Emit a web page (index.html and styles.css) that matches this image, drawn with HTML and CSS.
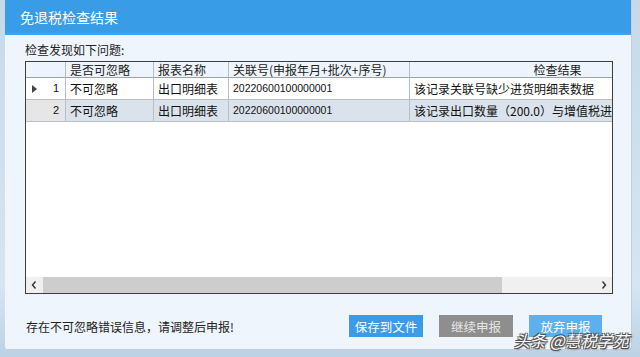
FILE: index.html
```html
<!DOCTYPE html>
<html lang="zh-CN">
<head>
    <meta charset="UTF-8">
    <title>免退税检查结果</title>
    <link rel="stylesheet" href="styles.css">
</head>
<body>
    <div class="dialog">
        <div class="dialog-title">免退税检查结果</div>
        <div class="dialog-body">
            <div class="intro">检查发现如下问题:</div>
            <div class="grid-box">
                <div class="grid-view">
                    <div class="grid">
                        <div class="cell head rowhead"></div>
                        <div class="cell head">是否可忽略</div>
                        <div class="cell head">报表名称</div>
                        <div class="cell head">关联号(申报年月+批次+序号)</div>
                        <div class="cell head center">检查结果</div>

                        <div class="cell rowhead current">
                            <svg class="marker" viewBox="0 0 5 8" width="5" height="8"><polygon points="0,0 5,4 0,8" fill="#444"/></svg>
                            <span>1</span>
                        </div>
                        <div class="cell">不可忽略</div>
                        <div class="cell">出口明细表</div>
                        <div class="cell num">20220600100000001</div>
                        <div class="cell">该记录关联号缺少进货明细表数据</div>

                        <div class="cell rowhead alt"><span>2</span></div>
                        <div class="cell alt">不可忽略</div>
                        <div class="cell alt">出口明细表</div>
                        <div class="cell alt num">20220600100000001</div>
                        <div class="cell alt">该记录出口数量（200.0）与增值税进货明细表数据不符</div>
                    </div>
                </div>
                <div class="hscroll">
                    <div class="scroll-btn">
                        <svg viewBox="0 0 6 8" width="6" height="8"><polyline points="4.5,0.5 1.5,4 4.5,7.5" fill="none" stroke="#333" stroke-width="1.4"/></svg>
                    </div>
                    <div class="scroll-thumb"></div>
                    <div class="scroll-track"></div>
                    <div class="scroll-btn">
                        <svg viewBox="0 0 6 8" width="6" height="8"><polyline points="1.5,0.5 4.5,4 1.5,7.5" fill="none" stroke="#333" stroke-width="1.4"/></svg>
                    </div>
                </div>
            </div>
            <div class="footer">
                <div class="message">存在不可忽略错误信息，请调整后申报!</div>
                <div class="actions">
                    <button class="btn btn-save">保存到文件</button>
                    <button class="btn btn-continue">继续申报</button>
                    <button class="btn btn-abandon">放弃申报</button>
                </div>
            </div>
        </div>
        <div class="watermark">头条 @慧税学苑</div>
    </div>
</body>
</html>
```

FILE: styles.css
```css
body {
    margin: 0;
    padding: 0;
    width: 640px;
    height: 357px;
    overflow: hidden;
    font-family: "Noto Sans CJK SC", "Liberation Sans", sans-serif;
    background: linear-gradient(180deg, #c7d9e8 0%, #d6e5f1 80%, #bcd2e5 100%);
}

.dialog {
    position: relative;
    margin-left: 5px;
    width: 627px;
    height: 350px;
    display: flex;
    flex-direction: column;
    background: #eef5fc;
    border-right: 1px solid #c3ced8;
    border-bottom: 1px solid #c3ced8;
    border-radius: 0 0 3px 3px;
    box-sizing: border-box;
}

.dialog-title {
    height: 35px;
    box-sizing: border-box;
    padding-left: 15px;
    background: #389ce6;
    border-bottom: 2px solid #3fa3ee;
    color: #fff;
    font-size: 14px;
    line-height: 34px;
}

.dialog-body {
    flex: 1;
    display: flex;
    flex-direction: column;
    padding: 7px 18px 0 20px;
}

.intro {
    height: 19px;
    font-size: 12px;
    line-height: 16px;
    color: #222;
}

.grid-box {
    width: 588px;
    height: 233px;
    box-sizing: border-box;
    border: 1px solid #3d3d3d;
    display: flex;
    flex-direction: column;
    background: #fff;
}

.grid-view {
    flex: 1;
    overflow: hidden;
}

.grid {
    display: grid;
    grid-template-columns: 40px 88px 75px 181px 292px;
    grid-template-rows: 16px 22px 22px;
    width: 676px;
}

.cell {
    box-sizing: border-box;
    border-right: 1px solid #b9bec4;
    border-bottom: 1px solid #b9bec4;
    padding-left: 4px;
    font-size: 12px;
    line-height: 21px;
    color: #111;
    white-space: nowrap;
    overflow: hidden;
}

.cell.head {
    background: #eef4fb;
    border-bottom-color: #9ea4aa;
    line-height: 15px;
    color: #222;
}

.cell.center {
    text-align: center;
}

.cell.num {
    font-family: "Liberation Sans", sans-serif;
    font-size: 10.5px;
}

.cell.alt {
    background: #dae3ec;
}

.rowhead {
    display: flex;
    align-items: center;
    justify-content: flex-end;
    padding: 0 6px 0 6px;
    font-family: "Liberation Sans", sans-serif;
    font-size: 11px;
}

.rowhead.current {
    justify-content: space-between;
}

.rowhead.alt {
    background: #e6e6e6;
}

.marker {
    display: block;
}

.hscroll {
    height: 16px;
    display: flex;
    background: #f0f0f0;
}

.scroll-btn {
    width: 16px;
    display: flex;
    align-items: center;
    justify-content: center;
}

.scroll-thumb {
    width: 459px;
    margin-left: 1px;
    background: #cdcdcd;
}

.scroll-track {
    flex: 1;
}

.footer {
    margin-top: 21px;
    display: flex;
    align-items: center;
    justify-content: space-between;
    height: 22px;
}

.message {
    font-size: 12px;
    color: #222;
    padding-left: 1px;
}

.actions {
    display: flex;
    gap: 16px;
    margin-right: 11px;
}

.btn {
    width: 74px;
    height: 22px;
    border: none;
    padding: 0;
    font-family: "Noto Sans CJK SC", sans-serif;
    font-size: 12.5px;
    color: #fff;
    cursor: pointer;
}

.btn-save {
    background: #3b9be6;
}

.btn-continue {
    background: #8e8e8e;
    color: #e6e6e6;
}

.btn-abandon {
    width: 73px;
    background: #5cb0f0;
}

.watermark {
    position: absolute;
    left: 509px;
    top: 328px;
    font-size: 16px;
    font-style: italic;
    color: #fff;
    white-space: nowrap;
    text-shadow: 1px 1px 0 #555, -1px -1px 0 #555, 1px -1px 0 #555, -1px 1px 0 #555, 1px 1px 2px #333;
}
```
